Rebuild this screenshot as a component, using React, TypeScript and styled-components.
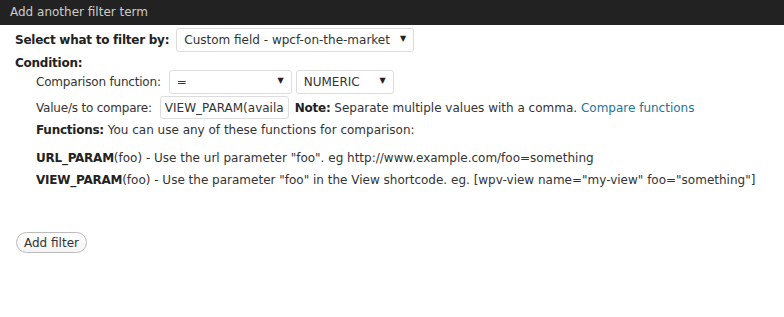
import React from "react";
import styled, { createGlobalStyle } from "styled-components";

const GlobalStyle = createGlobalStyle`
  body {
    margin: 0;
    background: #fff;
    font-family: "DejaVu Sans", Verdana, sans-serif;
    font-size: 12px;
    color: #333;
  }
`;

const Panel = styled.div`
  width: 784px;
  height: 317px;
  background: #fff;
`;

const Header = styled.div`
  height: 25px;
  background: #222;
  color: #ccc;
  font-size: 12px;
  line-height: 25px;
  padding-left: 10px;
`;

const Body = styled.div`
  padding: 3px 15px 0 15px;
`;

const Row = styled.div<{ $indent?: number; $mt?: number }>`
  display: flex;
  align-items: center;
  gap: 4px;
  margin-left: ${(p) => p.$indent ?? 0}px;
  margin-top: ${(p) => p.$mt ?? 0}px;
  min-height: 21px;
  white-space: nowrap;
`;

const Label = styled.span<{ $gap?: number }>`
  margin-right: ${(p) => p.$gap ?? 4}px;
  letter-spacing: -0.2px;
`;

const Bold = styled.b`
  font-weight: bold;
  color: #222;
  letter-spacing: -0.25px;
`;

const SelectWrap = styled.div<{ $w: number }>`
  position: relative;
  width: ${(p) => p.$w}px;
  height: 24px;
`;

const Select = styled.select`
  appearance: none;
  width: 100%;
  height: 100%;
  box-sizing: border-box;
  border: 1px solid #ddd;
  border-radius: 3px;
  background: #fff;
  font-family: inherit;
  font-size: 12px;
  color: #333;
  padding: 0 7px;
  margin: 0;
`;

const Arrow = styled.span`
  position: absolute;
  right: 8px;
  top: 6px;
  font-size: 8px;
  color: #222;
  pointer-events: none;
`;

const TextInput = styled.input`
  width: 129px;
  height: 23px;
  box-sizing: border-box;
  border: 1px solid #ddd;
  border-radius: 3px;
  font-family: inherit;
  font-size: 12px;
  color: #333;
  padding: 0 4px;
  margin: 0 2px 0 0;
`;

const Link = styled.a`
  color: #21759b;
  text-decoration: none;
`;

const Line = styled.div<{ $mt?: number }>`
  margin-left: 21px;
  margin-top: ${(p) => p.$mt ?? 0}px;
  line-height: 22px;
  white-space: nowrap;
`;

const Button = styled.button`
  margin-top: 41px;
  margin-left: 1px;
  height: 21px;
  padding: 0 7px;
  border: 1px solid #bbb;
  border-radius: 11px;
  background: linear-gradient(#fefefe, #f4f4f4);
  font-family: inherit;
  font-size: 12px;
  color: #333;
`;

type Opt = { w: number; value: string };

const Dropdown = ({ w, value }: Opt) => (
  <SelectWrap $w={w}>
    <Select defaultValue={value}>
      <option>{value}</option>
    </Select>
    <Arrow>▼</Arrow>
  </SelectWrap>
);

export default function App() {
  return (
    <Panel>
      <GlobalStyle />
      <Header>Add another filter term</Header>
      <Body>
        <Row>
          <Label $gap={3}>
            <Bold>Select what to filter by:</Bold>
          </Label>
          <Dropdown w={238} value="Custom field - wpcf-on-the-market" />
        </Row>
        <Row>
          <Bold>Condition:</Bold>
        </Row>
        <Row $indent={21} $mt={-3}>
          <Label $gap={4}>Comparison function:</Label>
          <Dropdown w={123} value="=" />
          <Dropdown w={98} value="NUMERIC" />
        </Row>
        <Row $indent={21} $mt={2}>
          <Label $gap={4}>Value/s to compare:</Label>
          <TextInput defaultValue="VIEW_PARAM(available)" />
          <span>
            <Bold>Note:</Bold> Separate multiple values with a comma.{" "}
            <Link href="#">Compare functions</Link>
          </span>
        </Row>
        <Line>
          <Bold>Functions:</Bold> You can use any of these functions for comparison:
        </Line>
        <Line $mt={6}>
          <Bold>URL_PARAM</Bold>(foo) - Use the url parameter "foo". eg http://www.example.com/foo=something
        </Line>
        <Line>
          <Bold>VIEW_PARAM</Bold>(foo) - Use the parameter "foo" in the View shortcode. eg. [wpv-view name="my-view" foo="something"]
        </Line>
        <Button>Add filter</Button>
      </Body>
    </Panel>
  );
}
